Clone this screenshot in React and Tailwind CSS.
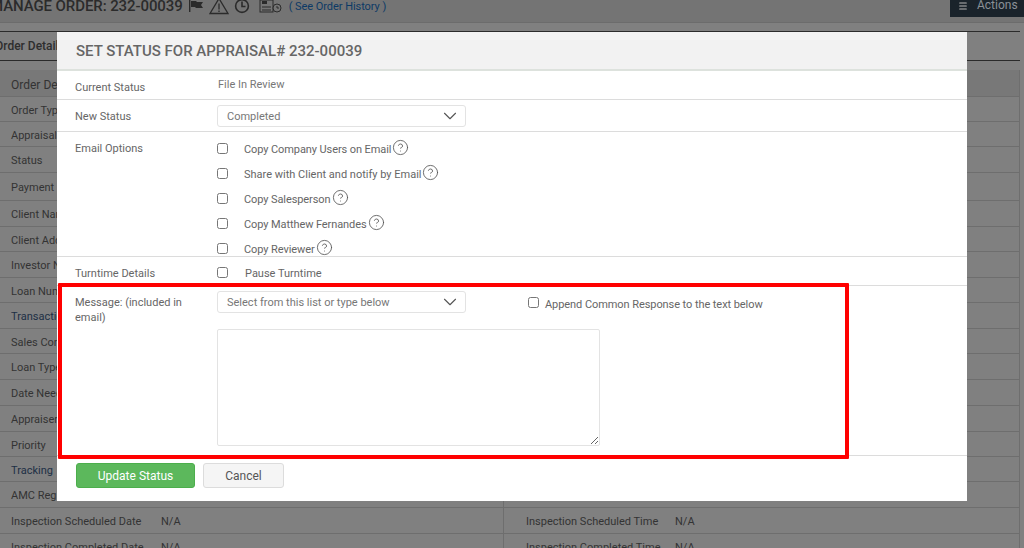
import React from 'react';
import { ChevronDown, CircleHelp, Menu } from 'lucide-react';

const leftRows = [
  ['Order Details', 27, true],
  ['Order Type', 25],
  ['Appraisal', 25],
  ['Status', 26],
  ['Payment', 28],
  ['Client Name', 26],
  ['Client Address', 25],
  ['Investor Name', 26],
  ['Loan Number', 25],
  ['Transaction', 26, false, true],
  ['Sales Contact', 25],
  ['Loan Type', 26],
  ['Date Needed', 26],
  ['Appraiser', 26],
  ['Priority', 25],
  ['Tracking', 25, false, true],
  ['AMC Reg', 26],
  ['Inspection Scheduled Date', 26, false, false, 'N/A'],
  ['Inspection Completed Date', 26, false, false, 'N/A'],
];

const rightRows = [
  ['', 27, true],
  ...Array.from({ length: 16 }, (_, i) => ['', leftRows[i + 1][1]]),
  ['Inspection Scheduled Time', 26, false, false, 'N/A'],
  ['Inspection Completed Time', 26, false, false, 'N/A'],
];

const emailOptions = [
  { text: 'Copy Company Users on Email', tight: true },
  { text: 'Share with Client and notify by Email' },
  { text: 'Copy Salesperson', tight: true },
  { text: 'Copy Matthew Fernandes', tight: true },
  { text: 'Copy Reviewer', tight: true },
];

const DetailColumn = ({ rows, className, rowClass, labelClass }) => (
  <div className={className}>
    {rows.map(([label, height, head, link, value], i) => (
      <div
        key={i}
        style={{ height }}
        className={`flex items-center border-b border-[#6e6e6e] pt-[4px] text-[11px] ${rowClass} ${head ? 'bg-[#787878] text-[12px]' : ''} ${link ? 'text-[#1d2f45]' : 'text-[#333]'}`}
      >
        <span className={`shrink-0 whitespace-nowrap ${labelClass}`}>{label}</span>
        {value && <span>{value}</span>}
      </div>
    ))}
  </div>
);

const SelectBox = ({ text }) => (
  <div className="flex h-[22px] w-[249px] items-center justify-between rounded-[3px] border border-[#e3e3e3] bg-white pl-[9px] pr-[4px] text-[11px] text-[#777]">
    <span className="pt-[3px]">{text}</span>
    <ChevronDown size={22} strokeWidth={1.2} className="text-[#555]" />
  </div>
);

const Check = ({ className = '' }) => (
  <input type="checkbox" readOnly className={`m-0 h-[11px] w-[11px] shrink-0 ${className}`} />
);

const ModalRow = ({ label, className = '', labelClass = '', children }) => (
  <div className={`flex border-b border-[#dcdcdc] pl-[18px] ${className}`}>
    <div className={`w-[142px] shrink-0 text-[11px] leading-[15px] text-[#666] ${labelClass}`}>{label}</div>
    <div className="min-w-0 flex-1">{children}</div>
  </div>
);

export default function App() {
  return (
    <div className="relative h-[548px] w-[1024px] overflow-hidden bg-[#808080] font-['Roboto',sans-serif] text-[#2e2e2e]">
      {/* page behind the overlay */}
      <div className="flex h-[23px] items-start border-b border-[#6c6c6c] bg-[#747474]">
        <div className="ml-[-10px] mt-[-3px] flex items-center whitespace-nowrap text-[15px] leading-[13px] tracking-[-0.09px] text-[#2b2b2b]">
          <span className="font-medium">MANAGE ORDER: 232-00039</span>
          <svg width="16" height="12" viewBox="0 0 16 12" fill="#2b2b2b" className="ml-[5px]">
            <path d="M1 0h1.4v12H1zM3 1h5l1 1h6l-2 3 2 3H8L7 7H3z" />
          </svg>
          <svg width="20" height="18" viewBox="0 0 20 18" fill="none" stroke="#2b2b2b" strokeWidth="1.3" className="ml-[5px]">
            <path d="M10 1.5 19 16.5H1zM10 6.5v6M10 13.5v1.5" />
          </svg>
          <svg width="16" height="16" viewBox="0 0 16 16" fill="none" stroke="#2b2b2b" strokeWidth="1.6" className="ml-[5px]">
            <circle cx="8" cy="8" r="6.4" />
            <path d="M8 3.5V8.5H11.5" />
          </svg>
          <svg width="24" height="14" viewBox="0 0 24 14" fill="none" stroke="#2b2b2b" className="ml-[9px]">
            <rect x="1" y="1" width="13" height="12" strokeWidth="1" />
            <rect x="3" y="2" width="5" height="3" fill="#2b2b2b" stroke="none" />
            <path d="M3 8h9M3 11h9" strokeWidth="1" />
            <circle cx="18" cy="9" r="4" fill="#747474" strokeWidth="1" />
            <path d="M18 7v2h2" strokeWidth="1" />
          </svg>
          <span className="ml-[6px] text-[11px] tracking-[-0.05px] text-[#0d3a66]">( See Order History )</span>
        </div>
        <div className="ml-auto flex h-[17px] w-[74px] items-center gap-[9px] bg-[#1a232b] pl-[8px] text-[12px] text-[#8a9097]">
          <Menu size={10} strokeWidth={2.5} className="relative -top-[3px] text-[#b5b5b5]" />
          <span className="relative -top-[4px]">Actions</span>
        </div>
      </div>
      <div className="mr-[4px] mt-[8px] h-[31px] border-t border-[#2b2b2b]">
        <div className="flex h-[29px] items-center border-b border-[#2b2b2b] text-[12px] font-medium">
          <span className="ml-[-5px]">Order Details</span>
        </div>
      </div>
      <div className="mr-[4px] mt-[8px] flex border-r border-[#6e6e6e]">
        <DetailColumn rows={leftRows} className="w-[504px] border-r border-[#6e6e6e]" rowClass="pl-[11px]" labelClass="w-[150px]" />
        <DetailColumn rows={rightRows} className="flex-1" rowClass="pl-[22px]" labelClass="w-[149px]" />
      </div>

      {/* modal */}
      <div className="absolute left-[57px] top-[32px] h-[469px] w-[910px] bg-white">
        <div className="flex h-[39px] items-center border-b-2 border-[#dde2dd] bg-[#f2f2f2] pl-[19px] pt-[2px] text-[15px] font-medium text-[#666]">
          SET STATUS FOR APPRAISAL# 232-00039
        </div>
        <ModalRow label="Current Status" className="h-[29px] items-center pt-[4px]">
          <span className="relative -top-[4px] ml-[1px] text-[11px] text-[#777]">File In Review</span>
        </ModalRow>
        <ModalRow label="New Status" className="h-[32px] items-center" labelClass="pt-[2px]">
          <SelectBox text="Completed" />
        </ModalRow>
        <ModalRow label="Email Options" className="h-[125px] pt-[9px]">
          <div className="flex flex-col gap-[10px]">
            {emailOptions.map(({ text, tight }) => (
              <div key={text} className={`flex h-[15px] items-center text-[11px] text-[#666] ${tight ? 'tracking-[-0.09px]' : ''}`}>
                <Check />
                <span className="ml-[16px] pt-[4px]">{text}</span>
                <CircleHelp size={17} strokeWidth={1.2} className="relative -top-[1px] ml-[1px] text-[#555]" />
              </div>
            ))}
          </div>
        </ModalRow>
        <ModalRow label="Turntime Details" className="h-[29px] items-center pt-[4px]">
          <div className="flex items-center text-[11px] text-[#666]">
            <Check className="relative -top-[1px]" />
            <span className="ml-[17px] pt-[2px]">Pause Turntime</span>
          </div>
        </ModalRow>
        <ModalRow label="Message: (included in email)" className="h-[170px] pt-[9px]" labelClass="pr-[20px]">
          <div className="-mt-[4px]">
            <div className="flex items-center">
              <SelectBox text="Select from this list or type below" />
              <Check className="relative ml-[62px]" />
              <span className="relative top-[3px] ml-[6px] text-[11px] tracking-[-0.07px] text-[#666]">Append Common Response to the text below</span>
            </div>
            <textarea
              readOnly
              className="mt-[16px] block h-[117px] w-[383px] rounded-[2px] border border-[#e3e3e3] bg-white"
            />
          </div>
        </ModalRow>
        <div className="flex gap-[8px] pl-[19px] pt-[7px]">
          <button className="h-[25px] w-[119px] rounded-[3px] border border-[#4cae4c] bg-[#5cb85c] pt-[1px] text-[12px] text-white">
            Update Status
          </button>
          <button className="h-[25px] w-[81px] rounded-[3px] border border-[#dcdcdc] bg-[#f5f5f5] pt-[1px] text-[12px] text-[#555]">
            Cancel
          </button>
        </div>
        {/* red callout over the message section */}
        <div className="pointer-events-none absolute left-[1px] top-[251px] h-[176px] w-[791px] rounded-[1px] border-4 border-[#ff0000]" />
      </div>
    </div>
  );
}
